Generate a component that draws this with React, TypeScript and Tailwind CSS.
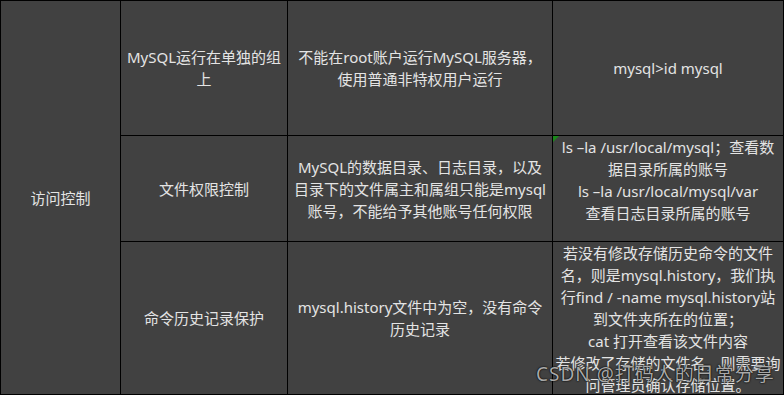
import React from "react";

const Lines = ({ lines }: { lines: string[] }) => (
  <div className="flex flex-col items-center">
    {lines.map((l, i) => (
      <div key={i} className="whitespace-nowrap leading-[22px]">
        {l}
      </div>
    ))}
  </div>
);

const Cell = ({
  lines,
  align = "center",
  className = "",
}: {
  lines: string[];
  align?: "center" | "start";
  className?: string;
}) => (
  <div
    className={
      "bg-[#414141] flex justify-center overflow-hidden " +
      (align === "center" ? "items-center " : "items-start ") +
      className
    }
  >
    <Lines lines={lines} />
  </div>
);

export default function App() {
  return (
    <div
      className="relative w-[784px] h-[395px] overflow-hidden bg-[#414141] text-[15px] text-[#e4e4e4]"
      style={{ fontFamily: '"Noto Sans", "Noto Sans CJK SC", sans-serif' }}
    >
      <div className="grid grid-cols-[119px_166px_264px_230px] grid-rows-[134px_105px_152px] gap-px bg-black p-px w-[784px] h-[395px]">
        <Cell lines={["访问控制"]} className="row-span-3" />

        <Cell lines={["MySQL运行在单独的组", "上"]} />
        <Cell lines={["不能在root账户运行MySQL服务器，", "使用普通非特权用户运行"]} />
        <Cell lines={["mysql>id mysql"]} />

        <Cell lines={["文件权限控制"]} />
        <Cell
          lines={[
            "MySQL的数据目录、日志目录，以及",
            "目录下的文件属主和属组只能是mysql",
            "账号，不能给予其他账号任何权限",
          ]}
        />
        <div className="relative bg-[#414141] flex justify-center items-start overflow-hidden">
          <div className="absolute left-0 top-0 w-0 h-0 border-t-[6px] border-t-[#1a8a1a] border-r-[6px] border-r-transparent" />
          <Lines
            lines={[
              "ls –la /usr/local/mysql；查看数",
              "据目录所属的账号",
              "ls –la /usr/local/mysql/var",
              "查看日志目录所属的账号",
            ]}
          />
        </div>

        <Cell lines={["命令历史记录保护"]} />
        <Cell lines={["mysql.history文件中为空，没有命令", "历史记录"]} />
        <Cell
          align="start"
          lines={[
            "若没有修改存储历史命令的文件",
            "名，则是mysql.history，我们执",
            "行find / -name mysql.history站",
            "到文件夹所在的位置；",
            "cat 打开查看该文件内容",
            "若修改了存储的文件名，则需要询",
            "问管理员确认存储位置。",
          ]}
        />
      </div>

      <div className="absolute left-[536px] top-[362px] whitespace-nowrap text-[19px] leading-[24px] tracking-[1px] text-[#a8a8a8] [text-shadow:0_0_2px_#000,0_0_1px_#000]">
        CSDN @打码人的日常分享
      </div>
    </div>
  );
}
